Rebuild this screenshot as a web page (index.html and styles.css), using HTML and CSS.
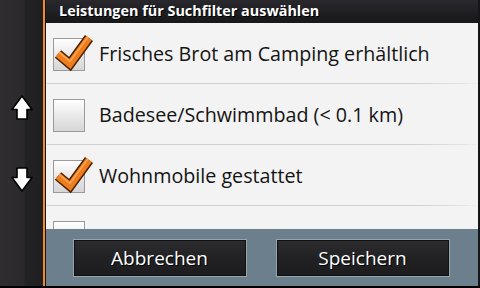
FILE: index.html
```html
<!DOCTYPE html>
<html lang="de">
<head>
<meta charset="utf-8">
<link rel="stylesheet" href="styles.css">
</head>
<body>
<div class="screen">
  <div class="sidebar">
    <div class="arrow up">
      <svg width="22" height="26" viewBox="0 0 22 26"><polygon points="11,1 21,14.5 16,14.5 16,24 6,24 6,14.5 1,14.5" fill="#fff" stroke="#000" stroke-width="1.6" stroke-linejoin="round"/></svg>
    </div>
    <div class="arrow down">
      <svg width="22" height="26" viewBox="0 0 22 26"><polygon points="11,25 21,11.5 16,11.5 16,2 6,2 6,11.5 1,11.5" fill="#fff" stroke="#000" stroke-width="1.6" stroke-linejoin="round"/></svg>
    </div>
  </div>
  <div class="accent"></div>
  <div class="main">
    <div class="header">Leistungen für Suchfilter auswählen</div>
    <div class="list">
      <div class="row">
        <div class="box checked">
          <svg class="check" width="40" height="40" viewBox="0 0 40 40"><polyline points="4,21 16,31 35,5" fill="none" stroke="#4a2200" stroke-width="10" stroke-linejoin="miter"/><polyline points="4,21 16,31 35,5" fill="none" stroke="#f07d1c" stroke-width="7" stroke-linejoin="miter"/><polyline points="5,19.3 16,28.3 34,3.8" fill="none" stroke="#f9a455" stroke-width="1.6"/></svg>
        </div>
        <span class="label">Frisches Brot am Camping erhältlich</span>
      </div>
      <div class="row">
        <div class="box"></div>
        <span class="label">Badesee/Schwimmbad (&lt; 0.1 km)</span>
      </div>
      <div class="row">
        <div class="box checked">
          <svg class="check" width="40" height="40" viewBox="0 0 40 40"><polyline points="4,21 16,31 35,5" fill="none" stroke="#4a2200" stroke-width="10" stroke-linejoin="miter"/><polyline points="4,21 16,31 35,5" fill="none" stroke="#f07d1c" stroke-width="7" stroke-linejoin="miter"/><polyline points="5,19.3 16,28.3 34,3.8" fill="none" stroke="#f9a455" stroke-width="1.6"/></svg>
        </div>
        <span class="label">Wohnmobile gestattet</span>
      </div>
      <div class="row">
        <div class="box"></div>
        <span class="label">Duschen mit warmem Wasser</span>
      </div>
    </div>
    <div class="footer">
      <button class="btn">Abbrechen</button>
      <button class="btn">Speichern</button>
    </div>
  </div>
</div>
</body>
</html>
```
FILE: styles.css
```css
html, body {
  margin: 0;
  padding: 0;
  background: #000;
}
body {
  width: 480px;
  height: 288px;
  overflow: hidden;
  font-family: "Open Sans", "Noto Sans", "DejaVu Sans", sans-serif;
}
.screen {
  display: flex;
  height: 286px;
}
.sidebar {
  width: 43px;
  flex: none;
  background: linear-gradient(to right, #2f2d2f 0, #2b292b 24px, #222224 25px, #1f1f21 43px);
  display: flex;
  flex-direction: column;
  align-items: center;
  padding-top: 95px;
  gap: 45px;
  box-sizing: border-box;
  padding-left: 1px;
}
.arrow {
  width: 22px;
  height: 26px;
}
.arrow svg {
  display: block;
}
.accent {
  width: 2px;
  flex: none;
  background: #f28c1e;
  border-right: 1px solid #111;
}
.main {
  flex: 1;
  display: flex;
  flex-direction: column;
  border-right: 2px solid #161618;
  min-width: 0;
}
.header {
  height: 23px;
  flex: none;
  background: linear-gradient(#29292d, #17171a);
  color: #fff;
  font-weight: 700;
  font-size: 14.4px;
  line-height: 22px;
  padding-left: 13px;
  text-shadow: 1px 1px 0 #000;
  white-space: nowrap;
  overflow: hidden;
}
.list {
  flex: 1;
  overflow: hidden;
  background: #f3f3f3;
}
.row {
  height: 60px;
  display: flex;
  align-items: center;
  border-bottom: 1px solid transparent;
  border-image: linear-gradient(to right, #f3f3f3 0, #cfcfcf 4px, #cfcfcf 365px, #e6e6e6 420px, #f3f3f3 432px) 1;
}
.box {
  position: relative;
  width: 30px;
  height: 31px;
  margin-left: 7px;
  margin-top: 2px;
  border: 1px solid #9a9a9a;
  background: linear-gradient(#ffffff, #e9e9e9 50%, #d6d6d6);
  flex: none;
}
.check {
  position: absolute;
  left: 0;
  top: -6px;
  overflow: visible;
}
.label {
  margin-left: 14px;
  font-size: 19.7px;
  color: #141414;
  white-space: nowrap;
}
.footer {
  height: 57px;
  flex: none;
  background: #6b808c;
  display: flex;
  justify-content: center;
  align-items: flex-start;
  gap: 29px;
  padding-top: 10px;
  box-sizing: border-box;
  padding-right: 2px;
}
.btn {
  width: 174px;
  height: 38px;
  border: 1px solid #9aa6ad;
  box-shadow: inset 0 0 0 1px #111;
  background: linear-gradient(#2c2c2e, #222224 50%, #1c1c1e);
  color: #fff;
  font-family: "Open Sans", "Noto Sans", "DejaVu Sans", sans-serif;
  font-size: 19px;
  text-shadow: 1px 1px 0 #000;
  padding: 0;
}
```
